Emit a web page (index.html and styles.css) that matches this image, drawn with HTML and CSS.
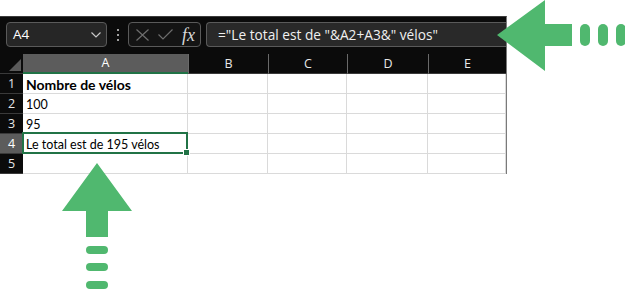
FILE: index.html
```html
<!DOCTYPE html>
<html lang="fr">
<head>
<meta charset="utf-8">
<title>Excel concat</title>
<link rel="stylesheet" href="styles.css">
</head>
<body>
<div class="stage">
  <div class="sheet">
    <div class="toolbar">
      <div class="namebox">
        <span class="ref">A4</span>
        <svg class="chev" width="10" height="6" viewBox="0 0 10 6"><polyline points="0.5,0.5 5,5 9.5,0.5" fill="none" stroke="#c8c8c8" stroke-width="1.2"/></svg>
      </div>
      <div class="dots"><i></i><i></i><i></i></div>
      <div class="fxbox">
        <svg class="ico" width="13" height="12" viewBox="0 0 13 12"><path d="M0.5 0.5 L12.5 11.5 M12.5 0.5 L0.5 11.5" stroke="#6e6e6e" stroke-width="1.2" fill="none"/></svg>
        <svg class="ico" width="15" height="11" viewBox="0 0 15 11"><polyline points="0.5,5.5 5,10 14.5,0.5" stroke="#6e6e6e" stroke-width="1.2" fill="none"/></svg>
        <span class="fx">fx</span>
      </div>
      <div class="formula">="Le total est de "&amp;A2+A3&amp;" vélos"</div>
    </div>
    <div class="grid">
      <div class="corner"><span class="tri"></span></div>
      <div class="ch sel">A</div>
      <div class="ch">B</div>
      <div class="ch">C</div>
      <div class="ch">D</div>
      <div class="ch last">E</div>

      <div class="rh">1</div>
      <div class="c bold">Nombre de vélos</div><div class="c"></div><div class="c"></div><div class="c"></div><div class="c"></div>

      <div class="rh">2</div>
      <div class="c">100</div><div class="c"></div><div class="c"></div><div class="c"></div><div class="c"></div>

      <div class="rh">3</div>
      <div class="c">95</div><div class="c"></div><div class="c"></div><div class="c"></div><div class="c"></div>

      <div class="rh sel">4</div>
      <div class="c active">Le total est de 195 vélos</div><div class="c"></div><div class="c"></div><div class="c"></div><div class="c"></div>

      <div class="rh">5</div>
      <div class="c"></div><div class="c"></div><div class="c"></div><div class="c"></div><div class="c"></div>
    </div>
  </div>

  <div class="arrow-left">
    <svg width="128" height="72" viewBox="0 0 128 72">
      <polygon points="0,35 48,0 48,24 75,24 75,46 48,46 48,71" fill="#50b86f"/>
      <rect x="83" y="24" width="10" height="22" rx="5" fill="#50b86f"/>
      <rect x="101" y="24" width="10" height="22" rx="5" fill="#50b86f"/>
      <rect x="119" y="24" width="10" height="22" rx="5" fill="#50b86f"/>
    </svg>
  </div>

  <div class="arrow-up">
    <svg width="72" height="128" viewBox="0 0 72 128">
      <polygon points="35,0 70,48 46,48 46,74 24,74 24,48 0,48" fill="#50b86f"/>
      <rect x="24" y="83" width="22" height="8" rx="4" fill="#50b86f"/>
      <rect x="24" y="100" width="22" height="8" rx="4" fill="#50b86f"/>
      <rect x="24" y="118" width="22" height="8" rx="4" fill="#50b86f"/>
    </svg>
  </div>
</div>
</body>
</html>
```

FILE: styles.css
```css
html, body {
  margin: 0;
  padding: 0;
  background: #ffffff;
}
body {
  width: 625px;
  height: 290px;
  overflow: hidden;
}
.stage {
  position: relative;
  width: 625px;
  height: 290px;
  padding-top: 16px;
  box-sizing: border-box;
}
.sheet {
  width: 507px;
  background: #0b0b0b;
  border-top: 1px solid #3c3c3c;
  box-sizing: border-box;
  border-right: 1px solid #7a7a7a;
}
.toolbar {
  display: flex;
  align-items: center;
  height: 37px;
  padding: 5px 0 7px 6px;
  box-sizing: border-box;
}
.namebox {
  width: 101px;
  height: 25px;
  box-sizing: border-box;
  border: 1px solid #5a5a5a;
  border-radius: 4px;
  background: #262626;
  display: flex;
  align-items: center;
  justify-content: space-between;
  padding: 0 5px 0 6px;
}
.ref {
  font-family: "Open Sans", sans-serif;
  font-size: 13.5px;
  color: #ffffff;
  line-height: 1;
}
.dots {
  width: 21px;
  display: flex;
  flex-direction: column;
  align-items: center;
  gap: 3px;
}
.dots i {
  display: block;
  width: 2px;
  height: 2px;
  background: #a0a0a0;
}
.fxbox {
  width: 73px;
  height: 25px;
  box-sizing: border-box;
  border: 1px solid #5a5a5a;
  border-radius: 4px;
  background: #141414;
  display: flex;
  align-items: center;
  padding: 0 0 0 7px;
  gap: 9px;
}
.fx {
  font-family: "Liberation Serif", serif;
  font-style: italic;
  font-size: 18px;
  color: #d8d8d8;
  line-height: 1;
  margin-left: 0;
}
.formula {
  flex: 1;
  margin-left: 5px;
  height: 25px;
  box-sizing: border-box;
  border: 1px solid #5a5a5a;
  border-right: none;
  border-radius: 4px 0 0 4px;
  background: #292929;
  font-family: "Open Sans", sans-serif;
  font-size: 13.7px;
  color: #f0f0f0;
  line-height: 23px;
  padding-left: 11px;
  white-space: nowrap;
  overflow: hidden;
}
.grid {
  display: grid;
  grid-template-columns: 23px 165px 80px 79px 81px 78px;
  grid-auto-rows: 20px;
  font-family: "Open Sans", sans-serif;
}
.corner {
  position: relative;
  background: #0b0b0b;
  border-bottom: 1px solid #3a3a3a;
}
.tri {
  position: absolute;
  right: 2px;
  bottom: 2px;
  width: 0;
  height: 0;
  border-left: 12px solid transparent;
  border-bottom: 12px solid #5a5a5a;
}
.ch {
  background: #0b0b0b;
  color: #e8e8e8;
  font-size: 12.5px;
  text-align: center;
  line-height: 19px;
  border-left: 1px solid #6a6a6a;
  border-bottom: 1px solid #3a3a3a;
  box-sizing: border-box;
}
.ch.sel {
  background: #5c5c5c;
  border-left: none;
  border-bottom: 2px solid #217346;
  color: #ffffff;
  line-height: 18px;
}
.rh {
  background: #0b0b0b;
  color: #e8e8e8;
  font-size: 12.5px;
  text-align: center;
  line-height: 19px;
  border-bottom: 1px solid #3a3a3a;
  box-sizing: border-box;
}
.rh.sel {
  background: #5c5c5c;
  color: #ffffff;
}
.c {
  background: #ffffff;
  border-right: 1px solid #dadada;
  border-bottom: 1px solid #dadada;
  box-sizing: border-box;
  font-family: "Lato", "Open Sans", sans-serif;
  font-size: 12.5px;
  color: #000000;
  line-height: 21px;
  padding-left: 3px;
  white-space: nowrap;
  overflow: visible;
}
.c.bold {
  font-weight: bold;
  font-size: 14px;
}
.c.active {
  position: relative;
}
.c.active::after {
  content: "";
  position: absolute;
  left: -1px;
  top: -2px;
  right: -1px;
  bottom: -1px;
  border: 2px solid #217346;
}
.c.active::before {
  content: "";
  position: absolute;
  right: -3px;
  bottom: -3px;
  width: 5px;
  height: 5px;
  background: #217346;
  border: 1px solid #ffffff;
  z-index: 2;
}
.arrow-left {
  position: absolute;
  left: 497px;
  top: 0px;
  line-height: 0;
}
.arrow-up {
  position: absolute;
  left: 62px;
  top: 163px;
  line-height: 0;
}
```
